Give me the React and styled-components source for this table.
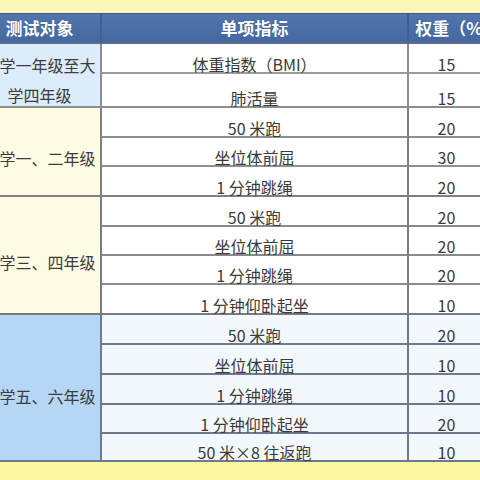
import React from "react";
import styled, { createGlobalStyle } from "styled-components";

const Global = createGlobalStyle`
  html, body { margin: 0; padding: 0; background: #fbf6b0; }
  * { box-sizing: border-box; }
`;

const Page = styled.div`
  width: 480px;
  height: 480px;
  overflow: hidden;
  background: linear-gradient(#fbf7bb 0, #fbf7bb 13px, #fcf8a6 13px);
  padding-top: 13px;
  font-family: "Noto Sans CJK SC", "Noto Sans", sans-serif;
`;

const Grid = styled.div`
  margin-left: -21px;
  width: 527px;
  display: grid;
  grid-template-columns: 123px 307px 97px;
  grid-template-rows: 30px 30px 34px 30px 29px 30px 30px 29px 29px 30px 30px 30px 30px 29px 28px;
  border-top: 1px solid #3d5a8c;
`;

const HeadCell = styled.div`
  background: linear-gradient(#5275ad, #4668a2);
  color: #ffffff;
  font-weight: 700;
  font-size: 17px;
  line-height: 20px;
  display: flex;
  align-items: center;
  justify-content: center;
  border-right: ${(p) => (p.$last ? "none" : "2px solid #3f5f93")};
  border-bottom: 2px solid #5b6f8e;
  text-shadow: 0 0 1px rgba(30, 50, 90, 0.6);
  white-space: nowrap;
`;

const GroupCell = styled.div`
  grid-column: 1;
  grid-row: span ${(p) => p.$span};
  background: ${(p) => p.$bg};
  border-right: 2px solid ${(p) => p.$line};
  border-bottom: 2px solid ${(p) => p.$line};
  display: flex;
  align-items: center;
  justify-content: center;
  padding-top: ${(p) => p.$pad}px;
  color: #3c3c3c;
  font-size: 16px;
`;

const GroupText = styled.div`
  text-align: center;
  line-height: ${(p) => p.$lh}px;
  white-space: nowrap;
`;

const BodyCell = styled.div`
  grid-column: ${(p) => p.$col};
  background: ${(p) => p.$bg};
  border-bottom: 2px solid ${(p) => p.$line};
  border-right: ${(p) => (p.$col === 2 ? `2px solid ${p.$vline}` : "none")};
  display: flex;
  align-items: flex-end;
  justify-content: center;
  color: #3a3a3a;
  font-size: 16px;
  line-height: 16px;
  padding-bottom: 0;
  white-space: nowrap;
  padding-right: ${(p) => (p.$col === 3 ? 22 : 0)}px;
`;

const groups = [
  {
    label: ["小学一年级至大", "学四年级"],
    bg: "#dcecfa",
    body: "#ffffff",
    line: "#9a9a9a",
    gline: "#8d8d8d",
    pad: 9,
    lh: 30,
    rows: [
      ["体重指数（BMI）", 15],
      ["肺活量", 15],
    ],
  },
  {
    label: ["小学一、二年级"],
    bg: "#fdfbe4",
    body: "#ffffff",
    line: "#909090",
    gline: "#7f7f7f",
    pad: 12,
    lh: 20,
    rows: [
      ["50 米跑", 20],
      ["坐位体前屈", 30],
      ["1 分钟跳绳", 20],
    ],
  },
  {
    label: ["小学三、四年级"],
    bg: "#fdfbe4",
    body: "#ffffff",
    line: "#8a8a8a",
    gline: "#7a7a84",
    pad: 14,
    lh: 20,
    rows: [
      ["50 米跑", 20],
      ["坐位体前屈", 20],
      ["1 分钟跳绳", 20],
      ["1 分钟仰卧起坐", 10],
    ],
  },
  {
    label: ["小学五、六年级"],
    bg: "#b5d6f4",
    body: "#f3f8fd",
    line: "#6f7891",
    gline: "#6f7891",
    pad: 16,
    lh: 20,
    rows: [
      ["50 米跑", 20],
      ["坐位体前屈", 10],
      ["1 分钟跳绳", 10],
      ["1 分钟仰卧起坐", 20],
      ["50 米×8 往返跑", 10],
    ],
  },
];

export default function App() {
  return (
    <>
      <Global />
      <Page>
        <Grid>
          <HeadCell>测试对象</HeadCell>
          <HeadCell>单项指标</HeadCell>
          <HeadCell $last>权重（%）</HeadCell>
          {groups.map((g, gi) => (
            <React.Fragment key={gi}>
              <GroupCell
                $span={g.rows.length}
                $bg={g.bg}
                $line={g.gline}
                $pad={g.pad}
              >
                <GroupText $lh={g.lh}>
                  {g.label.map((l, i) => (
                    <div key={i}>{l}</div>
                  ))}
                </GroupText>
              </GroupCell>
              {g.rows.map((r, ri) => {
                const last = ri === g.rows.length - 1;
                const line = last ? g.gline : g.line;
                return (
                  <React.Fragment key={ri}>
                    <BodyCell $col={2} $bg={g.body} $line={line} $vline={g.gline}>
                      {r[0]}
                    </BodyCell>
                    <BodyCell $col={3} $bg={g.body} $line={line}>
                      {r[1]}
                    </BodyCell>
                  </React.Fragment>
                );
              })}
            </React.Fragment>
          ))}
        </Grid>
      </Page>
    </>
  );
}
